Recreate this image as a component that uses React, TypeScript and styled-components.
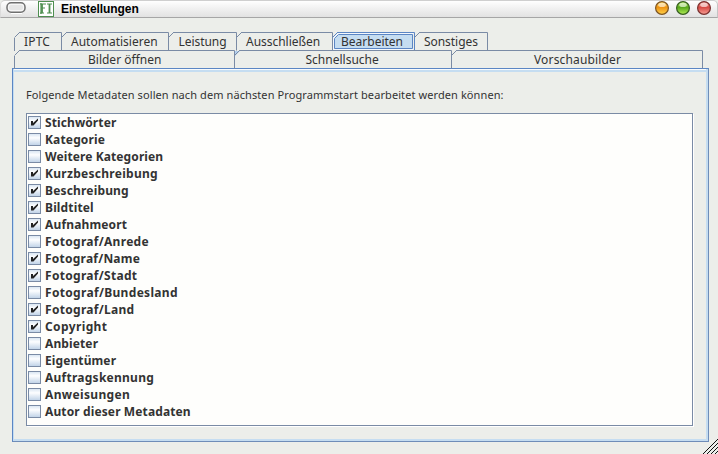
import React from 'react';
import styled, { createGlobalStyle } from 'styled-components';

const STEEL = '#7a8ba5';
const BLUE = '#5b86c4';
const PALE = '#c5ddf1';
const FACE = '#eceeea';

const GlobalStyle = createGlobalStyle`
  html, body { margin: 0; padding: 0; overflow: hidden; background: ${FACE}; }
  * { box-sizing: border-box; }
`;

const Window = styled.div`
  position: relative;
  width: 718px;
  height: 454px;
  display: flex;
  flex-direction: column;
  background: ${FACE};
  color: #333;
  font-family: 'Noto Sans', 'Open Sans', sans-serif;
  font-size: 12px;
  overflow: hidden;
`;

const TitleBar = styled.header`
  flex: none;
  height: 18px;
  display: flex;
  align-items: flex-start;
  border-top: 1px solid #cfcfcf;
  border-bottom: 1px solid #a6a6a6;
  border-left: 1px solid #dcdcdc;
  border-right: 1px solid #c4c4c4;
  border-radius: 5px 5px 0 0;
  background: linear-gradient(#ffffff, #f4f4f4 35%, #e2e2e2);
`;

const MenuIcon = styled.svg`
  flex: none;
  margin-left: 5px;
`;

const AppIcon = styled.svg`
  flex: none;
  margin-left: 11px;
`;

const Title = styled.h1`
  flex: 1;
  margin: 0 0 0 7px;
  font: bold 12px/17px 'Liberation Sans', Arial, sans-serif;
  letter-spacing: -0.08px;
  color: #000;
`;

const Orbs = styled.div`
  display: flex;
  gap: 7px;
  margin-right: 6px;
`;

const Dialog = styled.main`
  flex: 1;
  display: flex;
  flex-direction: column;
  padding: 14px 9px 12px 12px;
`;

const TabRow = styled.div`
  display: flex;
  height: 18px;
  padding-left: 2px;
`;

const Tab = styled.div<{ $width: number; $spacing: number; $indent: number }>`
  position: relative;
  flex: none;
  width: ${p => p.$width}px;
  height: 18px;
  padding: 1px 0 0 ${p => p.$indent}px;
  line-height: 18px;
  white-space: nowrap;
  letter-spacing: ${p => p.$spacing}px;
`;

const TabOutline = styled.svg`
  position: absolute;
  left: 0;
  top: 0;
  overflow: visible;
`;

const TabLabel = styled.span`
  position: relative;
`;

const Panel = styled.section`
  flex: none;
  height: 374px;
  border: 1px solid ${BLUE};
  border-right-color: #6f8db8;
  border-bottom-color: #6f8db8;
  box-shadow: inset 1px 0 ${PALE}, inset -2px -2px ${PALE}, inset 0 1px #f8fbfd, inset 0 3px ${PALE};
  padding: 17px 14px 14px 13px;
`;

const Hint = styled.p`
  margin: 0 0 10px;
  height: 17px;
  font-size: 11px;
  line-height: 17px;
  letter-spacing: 0.09px;
  white-space: nowrap;
`;

const List = styled.ul`
  width: 667px;
  height: 313px;
  margin: 0;
  padding: 0 0 0 1px;
  list-style: none;
  background: #fefefc;
  border: 1px solid ${STEEL};
  box-shadow: 1px 1px #fff;
`;

const Item = styled.li`
  display: flex;
  align-items: center;
  height: 17px;
  gap: 4px;
`;

const Box = styled.span`
  flex: none;
  display: flex;
  width: 13px;
  height: 13px;
  border: 1px solid ${STEEL};
  background: linear-gradient(#dbe7f3, #fdfeff 35%, #c2d4e8);
`;

const ItemLabel = styled.span<{ $spacing: number }>`
  font-weight: 700;
  font-size: 12px;
  line-height: 17px;
  letter-spacing: ${p => p.$spacing}px;
  white-space: nowrap;
`;

const Grip = styled.svg`
  position: absolute;
  right: 0;
  bottom: 0;
`;

type TabSpec = { label: string; width: number; indent: number; spacing: number; selected?: boolean; notch?: boolean };

const upperTabs: TabSpec[] = [
  { label: 'IPTC', width: 47, indent: 10, spacing: 0.2 },
  { label: 'Automatisieren', width: 107, indent: 10, spacing: 0 },
  { label: 'Leistung', width: 68, indent: 10.5, spacing: -0.05 },
  { label: 'Ausschließen', width: 96, indent: 10, spacing: -0.03 },
  { label: 'Bearbeiten', width: 82, indent: 9, spacing: 0, selected: true },
  { label: 'Sonstiges', width: 73, indent: 10, spacing: -0.05 },
];

const lowerTabs: TabSpec[] = [
  { label: 'Bilder öffnen', width: 220, indent: 74, spacing: 0 },
  { label: 'Schnellsuche', width: 217, indent: 71.5, spacing: 0, notch: true },
  { label: 'Vorschaubilder', width: 251, indent: 83, spacing: 0.15 },
];

const fields: [string, boolean, number][] = [
  ['Stichwörter', true, 0.1],
  ['Kategorie', false, 0.15],
  ['Weitere Kategorien', false, 0.1],
  ['Kurzbeschreibung', true, 0.28],
  ['Beschreibung', true, 0.17],
  ['Bildtitel', true, 0.15],
  ['Aufnahmeort', true, 0.15],
  ['Fotograf/Anrede', false, 0.3],
  ['Fotograf/Name', true, 0.23],
  ['Fotograf/Stadt', true, 0.3],
  ['Fotograf/Bundesland', false, 0.32],
  ['Fotograf/Land', true, 0.3],
  ['Copyright', true, 0.38],
  ['Anbieter', false, 0.12],
  ['Eigentümer', false, 0.1],
  ['Auftragskennung', false, 0.25],
  ['Anweisungen', false, 0.35],
  ['Autor dieser Metadaten', false, 0.12],
];

function TabStrip({ tabs }: { tabs: TabSpec[] }) {
  return (
    <TabRow>
      {tabs.map((t, i) => {
        const edge = t.selected ? BLUE : STEEL;
        return (
          <Tab key={t.label} $width={t.width} $spacing={t.spacing} $indent={t.indent}>
            <TabOutline width={t.width} height={19} fill="none">
              {t.notch && <path d="M1 1h5L1 6z" fill="#b3cfee" />}
              {t.selected && <path d="M1 18V6L6 1H81V18z" fill="#f4f8fc" />}
              {t.selected && <path d="M2.5 16.5V6.5L6.5 2.5H80.5V16.5z" fill={PALE} stroke={BLUE} />}
              {i === 0 && <path d="M.5 6V19" stroke={STEEL} />}
              <path d="M.5 5.5L5.5 .5" stroke={edge} />
              <path d={`M5 .5H${t.width + 0.5}V18.5`} stroke={edge} />
            </TabOutline>
            <TabLabel>{t.label}</TabLabel>
          </Tab>
        );
      })}
    </TabRow>
  );
}

function Orb({ id, light, mid, dark }: { id: string; light: string; mid: string; dark: string }) {
  return (
    <svg width="14" height="15" viewBox="0 0 14 15">
      <defs>
        <linearGradient id={id} x1="0" y1="0" x2="0" y2="1">
          <stop offset="0" stopColor={light} />
          <stop offset=".45" stopColor={mid} />
          <stop offset="1" stopColor={light} />
        </linearGradient>
      </defs>
      <circle cx="7" cy="7" r="6.4" fill={`url(#${id})`} stroke={dark} strokeWidth="1.2" />
      <ellipse cx="7" cy="3.9" rx="3.8" ry="2.1" fill="#fff" opacity=".6" />
    </svg>
  );
}

export default function App() {
  return (
    <>
      <GlobalStyle />
      <Window>
        <TitleBar>
          <MenuIcon width="21" height="14" viewBox="0 0 21 14">
            <rect x="1" y="1.750" width="18" height="9.500" rx="4.200" fill="#f6f6f6" stroke="#707070" strokeWidth="1.5" />
            <rect x="3" y="4" width="14" height="5" rx="2" fill="#e6e6e6" />
            <path d="M5 12.500h11" stroke="#fff" />
          </MenuIcon>
          <AppIcon width="16" height="16" viewBox="0 0 16 16">
            <rect x=".5" y=".5" width="15" height="15" fill="#fff" stroke="#4f8f50" />
            <path d="M2 3h6M3 2v11M2 12h4M3 7h4M9 3h5M9 12h5" fill="none" stroke="#4f8f50" strokeWidth="1.200" />
            <path d="M4 3v9M11.500 3v9" fill="none" stroke="#4f8f50" strokeWidth="1.800" />
          </AppIcon>
          <Title>Einstellungen</Title>
          <Orbs>
            <Orb id="amber" light="#ffd34a" mid="#ef9414" dark="#7c5423" />
            <Orb id="green" light="#b4ef58" mid="#58a81c" dark="#365d21" />
            <Orb id="red" light="#f8a197" mid="#d64a45" dark="#79302f" />
          </Orbs>
        </TitleBar>
        <Dialog>
          <TabStrip tabs={upperTabs} />
          <TabStrip tabs={lowerTabs} />
          <Panel>
            <Hint>Folgende Metadaten sollen nach dem nächsten Programmstart bearbeitet werden können:</Hint>
            <List>
              {fields.map(([label, checked, spacing]) => (
                <Item key={label}>
                  <Box>
                    {checked && (
                      <svg width="11" height="11" viewBox="0 0 11 11">
                        <path d="M2 4h2v2L9 1.500V3.500L4.500 8.500H2z" fill="#222" />
                      </svg>
                    )}
                  </Box>
                  <ItemLabel $spacing={spacing}>{label}</ItemLabel>
                </Item>
              ))}
            </List>
          </Panel>
        </Dialog>
        <Grip width="15" height="15" viewBox="0 0 15 15" shapeRendering="crispEdges">
          <path d="M0 15L15 0M4 15L15 4M8 15L15 8M12 15L15 12" stroke="#111" />
        </Grip>
      </Window>
    </>
  );
}
